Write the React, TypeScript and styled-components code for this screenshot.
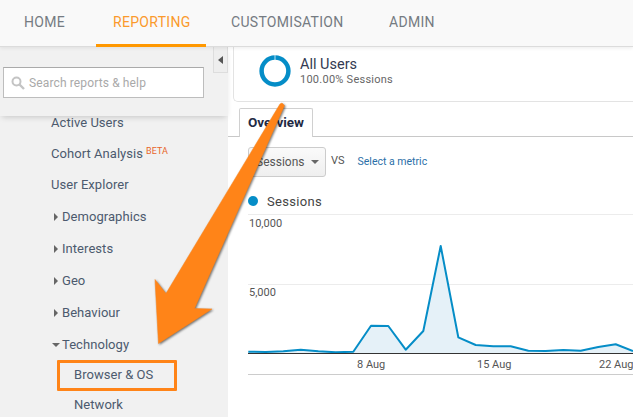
import React from "react";
import styled, { createGlobalStyle } from "styled-components";

const Global = createGlobalStyle`
  html, body { margin: 0; padding: 0; background: #fff; }
  body { font-family: Roboto, "Liberation Sans", sans-serif; }
`;

const Page = styled.div`
  position: relative;
  width: 633px;
  height: 417px;
  overflow: hidden;
  background: #fff;
  display: flex;
  flex-direction: column;
`;

const TopBar = styled.nav`
  position: relative;
  z-index: 2;
  flex: none;
  height: 46px;
  display: flex;
  padding-left: 24px;
  background: #f9f9f9;
  border-bottom: 1px solid #dcdcdc;
  box-shadow: 0 1px 4px rgba(0, 0, 0, 0.08);
`;

const NavItem = styled.div<{ $active?: boolean; $w: number }>`
  position: relative;
  width: ${(p) => p.$w}px;
  line-height: 45px;
  font-size: 14px;
  letter-spacing: 0.3px;
  color: ${(p) => (p.$active ? "#fb9a2c" : "#757b82")};
  ${(p) =>
    p.$active &&
    `&::after {
      content: "";
      position: absolute;
      left: -17px;
      width: 110px;
      bottom: -1px;
      height: 3px;
      background: #ff9800;
    }`}
`;

const Body = styled.div`
  flex: 1;
  display: flex;
  min-height: 0;
`;

const Sidebar = styled.aside`
  flex: none;
  width: 228px;
  background: #f1f1f1;
  display: flex;
  flex-direction: column;
`;

const SearchPanel = styled.div`
  position: relative;
  z-index: 1;
  flex: none;
  height: 69px;
  box-sizing: border-box;
  padding: 20px 0 0 3px;
  display: flex;
  align-items: flex-start;
  gap: 9px;
  background: #f1f1f1;
  box-shadow: 0 3px 6px -2px rgba(0, 0, 0, 0.18);
`;

const SearchBox = styled.div`
  width: 201px;
  height: 31px;
  box-sizing: border-box;
  background: #fff;
  border: 1px solid #bdbdbd;
  border-top-color: #aaa;
  display: flex;
  align-items: center;
  gap: 4px;
  padding-left: 7px;
  font-size: 12px;
  letter-spacing: 0.13px;
  color: #a9a9a9;
`;

const CollapseButton = styled.div`
  width: 15px;
  height: 26px;
  margin-top: -20px;
  box-sizing: border-box;
  background: #eee;
  border: 1px solid #ddd;
  border-top: none;
  display: flex;
  align-items: center;
  justify-content: center;
  &::before {
    content: "";
    border-style: solid;
    border-width: 4px 5px 4px 0;
    border-color: transparent #555 transparent transparent;
  }
`;

const NavList = styled.div`
  margin-top: -8px;
  display: flex;
  flex-direction: column;
`;

const Row = styled.div<{ $h: number; $indent: number }>`
  flex: none;
  height: ${(p) => p.$h}px;
  line-height: ${(p) => p.$h}px;
  padding-left: ${(p) => p.$indent}px;
  font-size: 13px;
  letter-spacing: 0.05px;
  color: #4c5a6e;
  display: flex;
  align-items: center;
  white-space: nowrap;
`;

const Beta = styled.span`
  font-size: 9px;
  line-height: 1;
  color: #e8662a;
  margin: -4px 0 0 3px;
`;

const Caret = styled.span<{ $open?: boolean }>`
  width: 0;
  height: 0;
  border-style: solid;
  ${(p) =>
    p.$open
      ? `border-width: 4px 4px 0 4px;
         border-color: #666 transparent transparent transparent;
         margin: 1px 2px 0 -10px;`
      : `border-width: 4px 0 4px 4px;
         border-color: transparent transparent transparent #666;
         margin: 0 4px 0 -8px;`}
`;

const Main = styled.main`
  flex: 1;
  min-width: 0;
  display: flex;
  flex-direction: column;
`;

const SegmentCard = styled.div`
  flex: none;
  height: 55px;
  margin-left: 5px;
  box-sizing: border-box;
  border-left: 1px solid #e3e3e3;
  border-bottom: 1px solid #e3e3e3;
  border-bottom-left-radius: 5px;
  display: flex;
  align-items: flex-start;
  padding: 8px 0 0 25px;
  gap: 9px;
`;

const SegmentText = styled.div`
  display: flex;
  flex-direction: column;
  padding-top: 1px;
`;

const SegmentName = styled.div`
  font-size: 14.5px;
  line-height: 17px;
  color: #333a52;
`;

const SegmentSub = styled.div`
  font-size: 11px;
  line-height: 13px;
  letter-spacing: 0.25px;
  color: #666;
`;

const TabRow = styled.div`
  flex: none;
  height: 29px;
  margin-top: 6px;
  box-sizing: border-box;
  padding-left: 11px;
  border-bottom: 1px solid #c8c8c8;
  display: flex;
  align-items: flex-end;
`;

const Tab = styled.div`
  width: 74px;
  height: 29px;
  margin-bottom: -1px;
  box-sizing: border-box;
  background: #fff;
  border: 1px solid #d0d0d0;
  border-bottom: none;
  border-radius: 2px 2px 0 0;
  text-align: center;
  line-height: 27px;
  font-size: 13.5px;
  font-weight: 700;
  color: #1f2a44;
`;

const MetricRow = styled.div`
  flex: none;
  display: flex;
  align-items: flex-start;
  margin: 10px 0 0 20px;
`;

const MetricSelect = styled.div`
  width: 78px;
  height: 30px;
  box-sizing: border-box;
  border: 1px solid #ccc;
  border-radius: 3px;
  background: linear-gradient(#fafafa, #efefef);
  display: flex;
  align-items: center;
  justify-content: space-between;
  padding: 0 6px 0 7px;
  font-size: 12px;
  color: #555;
  &::after {
    content: "";
    border-style: solid;
    border-width: 4px 4px 0 4px;
    border-color: #666 transparent transparent transparent;
  }
`;

const Vs = styled.div`
  font-size: 11px;
  line-height: 28px;
  margin-left: 5px;
  color: #555;
`;

const MetricLink = styled.div`
  font-size: 10.5px;
  line-height: 30px;
  margin-left: 13px;
  color: #2a6fa8;
`;

const Legend = styled.div`
  flex: none;
  display: flex;
  align-items: center;
  margin: 15px 0 0 20px;
  height: 18px;
  gap: 9px;
  font-size: 13px;
  letter-spacing: 0.3px;
  color: #444;
  &::before {
    content: "";
    width: 10px;
    height: 10px;
    border-radius: 50%;
    background: #058dc7;
  }
`;

const ChartWrap = styled.div`
  flex: none;
  margin-top: 1px;
  height: 170px;
`;

const ChartLabel = styled.text`
  font-family: Roboto, "Liberation Sans", sans-serif;
  font-size: 11px;
  fill: #555;
`;

const Annotation = styled.svg`
  position: absolute;
  left: 0;
  top: 0;
  z-index: 3;
  pointer-events: none;
  filter: drop-shadow(1px 1px 1px rgba(0, 0, 0, 0.55));
`;

const Highlight = styled.div`
  position: absolute;
  z-index: 3;
  left: 57px;
  top: 360px;
  width: 120px;
  height: 31px;
  box-sizing: border-box;
  border: 3px solid #ff8418;
  border-radius: 1px;
`;

const pts: [number, number][] = [
  [55, 434], [107, 435], [160, 433], [212, 428], [265, 433], [317, 436],
  [370, 434], [423, 356], [475, 357], [527, 428], [580, 372], [632, 117],
  [685, 391], [737, 414], [790, 418], [842, 418], [895, 431], [947, 432],
  [1000, 429], [1052, 431], [1105, 420], [1157, 412], [1209, 432],
];
// chart svg origin is page (228, 211); the points were read at 3x from page (230, 207)
const cx = (x: number) => +(2 + x / 3).toFixed(1);
const cy = (y: number) => +(y / 3 - 4).toFixed(1);
const line = pts.map(([x, y]) => `${cx(x)},${cy(y)}`).join(" ");

const SearchIcon = () => (
  <svg width="14" height="14" viewBox="0 0 14 14" fill="none" stroke="#c4c4c4">
    <circle cx="5.5" cy="5.5" r="4" strokeWidth="2" />
    <path d="M8.5 8.5 13 13" strokeWidth="2.4" />
  </svg>
);

const Donut = () => (
  <svg width="32" height="32" viewBox="0 0 32 32">
    <circle cx="16" cy="16" r="13.4" fill="none" stroke="#058dc7" strokeWidth="4.5" />
    <rect x="15.6" y="0" width="0.8" height="5.5" fill="#e8f4fa" />
  </svg>
);

const Chart = () => (
  <svg width="405" height="170" viewBox="0 0 405 170">
    <path d="M20 3.5H405M20 73.5H405" stroke="#ececec" />
    <path d="M20 163.5H405" stroke="#ccc" />
    <polygon points={`20,142 ${line} 405,142`} fill="#e5f1f8" />
    <polyline points={line} fill="none" stroke="#058dc7" strokeWidth="2" strokeLinejoin="round" />
    <path d="M20 142.5H405" stroke="#333" />
    <ChartLabel x="21" y="16">10,000</ChartLabel>
    <ChartLabel x="21" y="85">5,000</ChartLabel>
    <ChartLabel x="129" y="157">8 Aug</ChartLabel>
    <ChartLabel x="249" y="157">15 Aug</ChartLabel>
    <ChartLabel x="371" y="157">22 Aug</ChartLabel>
  </svg>
);

const items: { label: string; h: number; indent: number; caret?: "open" | "closed"; beta?: boolean }[] = [
  { label: "Active Users", h: 30, indent: 51 },
  { label: "Cohort Analysis", h: 31, indent: 51, beta: true },
  { label: "User Explorer", h: 32, indent: 51 },
  { label: "Demographics", h: 32, indent: 62, caret: "closed" },
  { label: "Interests", h: 32, indent: 62, caret: "closed" },
  { label: "Geo", h: 32, indent: 62, caret: "closed" },
  { label: "Behaviour", h: 32, indent: 62, caret: "closed" },
  { label: "Technology", h: 31, indent: 62, caret: "open" },
  { label: "Browser & OS", h: 30, indent: 74 },
  { label: "Network", h: 30, indent: 74 },
];

export default function App() {
  return (
    <Page>
      <Global />
      <TopBar>
        <NavItem $w={89}>HOME</NavItem>
        <NavItem $w={118} $active>REPORTING</NavItem>
        <NavItem $w={158}>CUSTOMISATION</NavItem>
        <NavItem $w={60}>ADMIN</NavItem>
      </TopBar>
      <Body>
        <Sidebar>
          <SearchPanel>
            <SearchBox>
              <SearchIcon />
              Search reports &amp; help
            </SearchBox>
            <CollapseButton />
          </SearchPanel>
          <NavList>
            {items.map((it) => (
              <Row key={it.label} $h={it.h} $indent={it.indent}>
                {it.caret && <Caret $open={it.caret === "open"} />}
                {it.label}
                {it.beta && <Beta>BETA</Beta>}
              </Row>
            ))}
          </NavList>
        </Sidebar>
        <Main>
          <SegmentCard>
            <Donut />
            <SegmentText>
              <SegmentName>All Users</SegmentName>
              <SegmentSub>100.00% Sessions</SegmentSub>
            </SegmentText>
          </SegmentCard>
          <TabRow>
            <Tab>Overview</Tab>
          </TabRow>
          <MetricRow>
            <MetricSelect>Sessions</MetricSelect>
            <Vs>VS</Vs>
            <MetricLink>Select a metric</MetricLink>
          </MetricRow>
          <Legend>Sessions</Legend>
          <ChartWrap>
            <Chart />
          </ChartWrap>
        </Main>
      </Body>
      <Highlight />
      <Annotation width="633" height="417" viewBox="0 0 633 417">
        <polygon
          points="280,104 282,103 284.5,105.5 194.5,308.5 212,309 158.5,343.5 155,279.5 166,293.5"
          fill="#ff8418"
          stroke="#ff8418"
          strokeWidth="0.5"
          strokeLinejoin="round"
        />
      </Annotation>
    </Page>
  );
}
